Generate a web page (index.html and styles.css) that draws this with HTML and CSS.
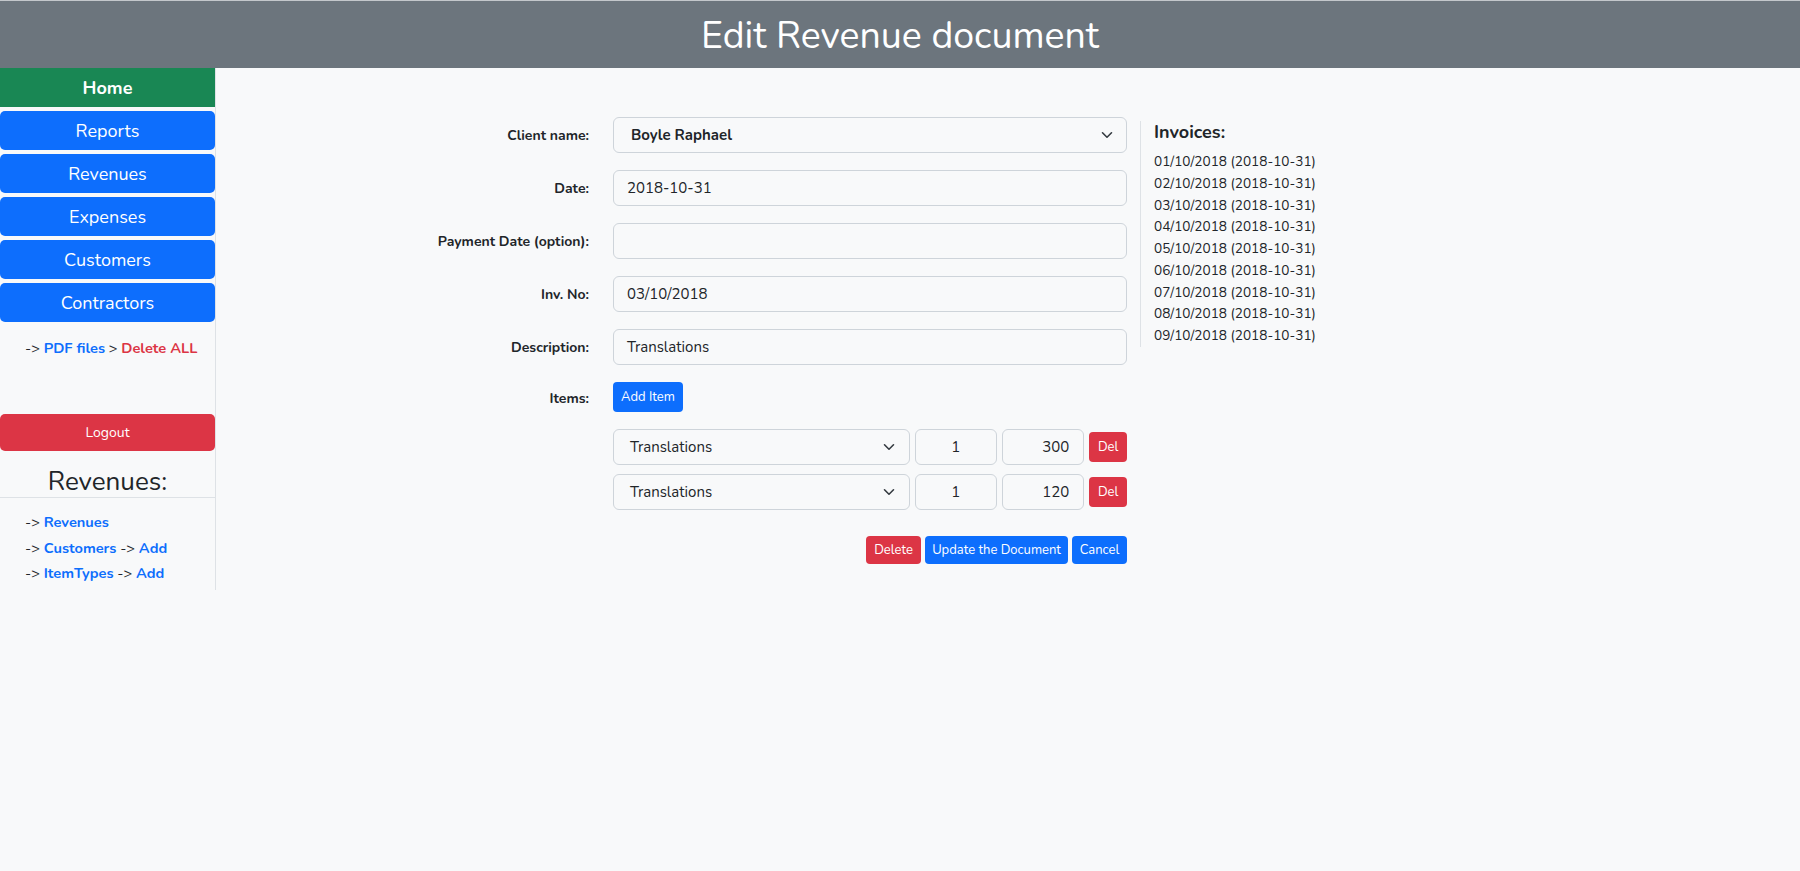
FILE: index.html
```html
<!DOCTYPE html>
<html lang="en">
<head>
<meta charset="utf-8">
<title>Edit Revenue document</title>
<link rel="stylesheet" href="styles.css">
</head>
<body>
<header class="topbar"><h1 class="title">Edit Revenue document</h1></header>
<div class="layout">
  <aside class="sidebar">
    <nav class="menu">
      <a class="nav-btn nav-home" href="#">Home</a>
      <a class="nav-btn" href="#">Reports</a>
      <a class="nav-btn" href="#">Revenues</a>
      <a class="nav-btn" href="#">Expenses</a>
      <a class="nav-btn" href="#">Customers</a>
      <a class="nav-btn" href="#">Contractors</a>
    </nav>
    <p class="side-links pdf-line">-&gt; <a class="lnk" href="#">PDF files</a> &gt; <a class="lnk lnk-red" href="#">Delete ALL</a></p>
    <button class="logout" type="button">Logout</button>
    <h2 class="side-title">Revenues:</h2>
    <ul class="side-list">
      <li>-&gt; <a class="lnk" href="#">Revenues</a></li>
      <li>-&gt; <a class="lnk" href="#">Customers</a> -&gt; <a class="lnk" href="#">Add</a></li>
      <li>-&gt; <a class="lnk" href="#">ItemTypes</a> -&gt; <a class="lnk" href="#">Add</a></li>
    </ul>
  </aside>
  <main class="content">
    <div class="editor">
      <form class="doc-form">
        <label class="lbl">Client name:</label>
        <div class="field select bold-val"><span>Boyle Raphael</span>
          <svg class="chev" width="12" height="8" viewBox="0 0 12 8"><path d="M1.5 1.8 6 6.2 10.5 1.8" fill="none" stroke="#343a40" stroke-width="1.6" stroke-linecap="round" stroke-linejoin="round"/></svg>
        </div>
        <label class="lbl">Date:</label>
        <div class="field">2018-10-31</div>
        <label class="lbl">Payment Date (option):</label>
        <div class="field"></div>
        <label class="lbl">Inv. No:</label>
        <div class="field">03/10/2018</div>
        <label class="lbl">Description:</label>
        <div class="field">Translations</div>
        <label class="lbl lbl-items">Items:</label>
        <div class="items">
          <button class="btn btn-blue add-item" type="button">Add Item</button>
          <div class="item-rows">
            <div class="item-row">
              <div class="field select item-type"><span>Translations</span>
                <svg class="chev" width="12" height="8" viewBox="0 0 12 8"><path d="M1.5 1.8 6 6.2 10.5 1.8" fill="none" stroke="#343a40" stroke-width="1.6" stroke-linecap="round" stroke-linejoin="round"/></svg>
              </div>
              <div class="field qty">1</div>
              <div class="field price">300</div>
              <button class="btn btn-red del" type="button">Del</button>
            </div>
            <div class="item-row">
              <div class="field select item-type"><span>Translations</span>
                <svg class="chev" width="12" height="8" viewBox="0 0 12 8"><path d="M1.5 1.8 6 6.2 10.5 1.8" fill="none" stroke="#343a40" stroke-width="1.6" stroke-linecap="round" stroke-linejoin="round"/></svg>
              </div>
              <div class="field qty">1</div>
              <div class="field price">120</div>
              <button class="btn btn-red del" type="button">Del</button>
            </div>
          </div>
          <div class="actions">
            <button class="btn btn-red act-sm" type="button">Delete</button>
            <button class="btn btn-blue act-lg" type="button">Update the Document</button>
            <button class="btn btn-blue act-sm" type="button">Cancel</button>
          </div>
        </div>
      </form>
      <section class="invoices">
        <h3 class="inv-title">Invoices:</h3>
        <ul class="inv-list">
          <li>01/10/2018 (2018-10-31)</li>
          <li>02/10/2018 (2018-10-31)</li>
          <li>03/10/2018 (2018-10-31)</li>
          <li>04/10/2018 (2018-10-31)</li>
          <li>05/10/2018 (2018-10-31)</li>
          <li>06/10/2018 (2018-10-31)</li>
          <li>07/10/2018 (2018-10-31)</li>
          <li>08/10/2018 (2018-10-31)</li>
          <li>09/10/2018 (2018-10-31)</li>
        </ul>
      </section>
    </div>
  </main>
</div>
</body>
</html>
```
FILE: styles.css
```css
* { box-sizing: border-box; }
html, body { margin: 0; padding: 0; }
body {
  background: #f8f9fa;
  color: #212529;
  font-family: "Nunito", "Lato", "Noto Sans", sans-serif;
  font-size: 15px;
  min-height: 871px;
}
.topbar {
  background: #6c757d;
  border-top: 1px solid #c3c7cb;
  height: 68px;
  display: flex;
  align-items: center;
  justify-content: center;
}
.title {
  margin: 0;
  color: #fff;
  font-weight: 400;
  font-size: 37.5px;
  line-height: 1;
  padding-top: 2px;
}
.layout { display: flex; align-items: flex-start; }
.sidebar {
  width: 216px;
  flex: none;
  border-right: 1px solid #dee2e6;
  padding-bottom: 3px;
}
.menu { display: flex; flex-direction: column; gap: 4px; }
.nav-btn {
  display: flex;
  align-items: center;
  justify-content: center;
  height: 39px;
  background: #0d6efd;
  color: #fff;
  text-decoration: none;
  font-size: 18px;
  border-radius: 5px;
}
.nav-home { background: #198754; font-weight: 700; border-radius: 0; }
.side-links { margin: 0; font-size: 14.6px; padding-left: 25px; }
.pdf-line { margin-top: 15px; line-height: 22px; }
.lnk { color: #0d6efd; font-weight: 700; text-decoration: none; }
.lnk-red { color: #dc3545; }
.logout {
  display: block;
  width: 215px;
  height: 37px;
  margin-top: 55px;
  border: none;
  border-radius: 5px;
  background: #dc3545;
  color: #fff;
  font-family: inherit;
  font-size: 14px;
}
.side-title {
  margin: 0;
  padding: 17px 0 1px;
  text-align: center;
  font-weight: 400;
  font-size: 26px;
  line-height: 28px;
  border-bottom: 1px solid #dee2e6;
}
.side-list {
  list-style: none;
  margin: 12px 0 0;
  padding: 0 0 0 25px;
  font-size: 14.6px;
  line-height: 25.5px;
}
.content { flex: 1; padding: 49px 0 0 173px; }
.editor { display: flex; align-items: flex-start; }
.doc-form {
  display: grid;
  grid-template-columns: 200px 514px;
  column-gap: 24px;
  row-gap: 17px;
  align-items: center;
}
.lbl {
  text-align: right;
  font-weight: 700;
  font-size: 14px;
}
.lbl-items { align-self: start; padding-top: 7px; }
.field {
  height: 36px;
  border: 1px solid #ced4da;
  border-radius: 6px;
  background: #f8f9fa;
  display: flex;
  align-items: center;
  padding: 0 13px;
  font-size: 15px;
}
.select { justify-content: space-between; padding: 0 13px 0 17px; }
.bold-val { font-weight: 700; }
.chev { flex: none; }
.items { align-self: start; }
.btn {
  border: none;
  border-radius: 4px;
  color: #fff;
  font-family: inherit;
  font-size: 13px;
  padding: 0;
  height: 28px;
}
.btn-blue { background: #0d6efd; }
.btn-red { background: #dc3545; }
.add-item { height: 30px; width: 70px; }
.item-rows { display: flex; flex-direction: column; gap: 9px; margin-top: 17px; }
.item-row { display: flex; align-items: center; }
.item-type { width: 299px; padding-left: 16px; padding-right: 14px; }
.qty { width: 82px; margin-left: 5px; justify-content: center; }
.price { width: 83px; margin-left: 5px; justify-content: flex-end; padding-right: 14px; }
.del { width: 38px; height: 30px; margin-left: 5px; }
.actions { display: flex; justify-content: flex-end; gap: 4px; margin-top: 26px; }
.act-sm { width: 55px; }
.act-lg { width: 143px; }
.invoices {
  margin-left: 13px;
  margin-top: 4px;
  border-left: 1px solid #dee2e6;
  padding: 0 0 0 13px;
  min-height: 226px;
}
.inv-title { margin: 0; font-size: 18px; font-weight: 700; line-height: 22px; }
.inv-list {
  list-style: none;
  margin: 8px 0 0;
  padding: 0;
  font-size: 13.6px;
  line-height: 21.75px;
}
```
